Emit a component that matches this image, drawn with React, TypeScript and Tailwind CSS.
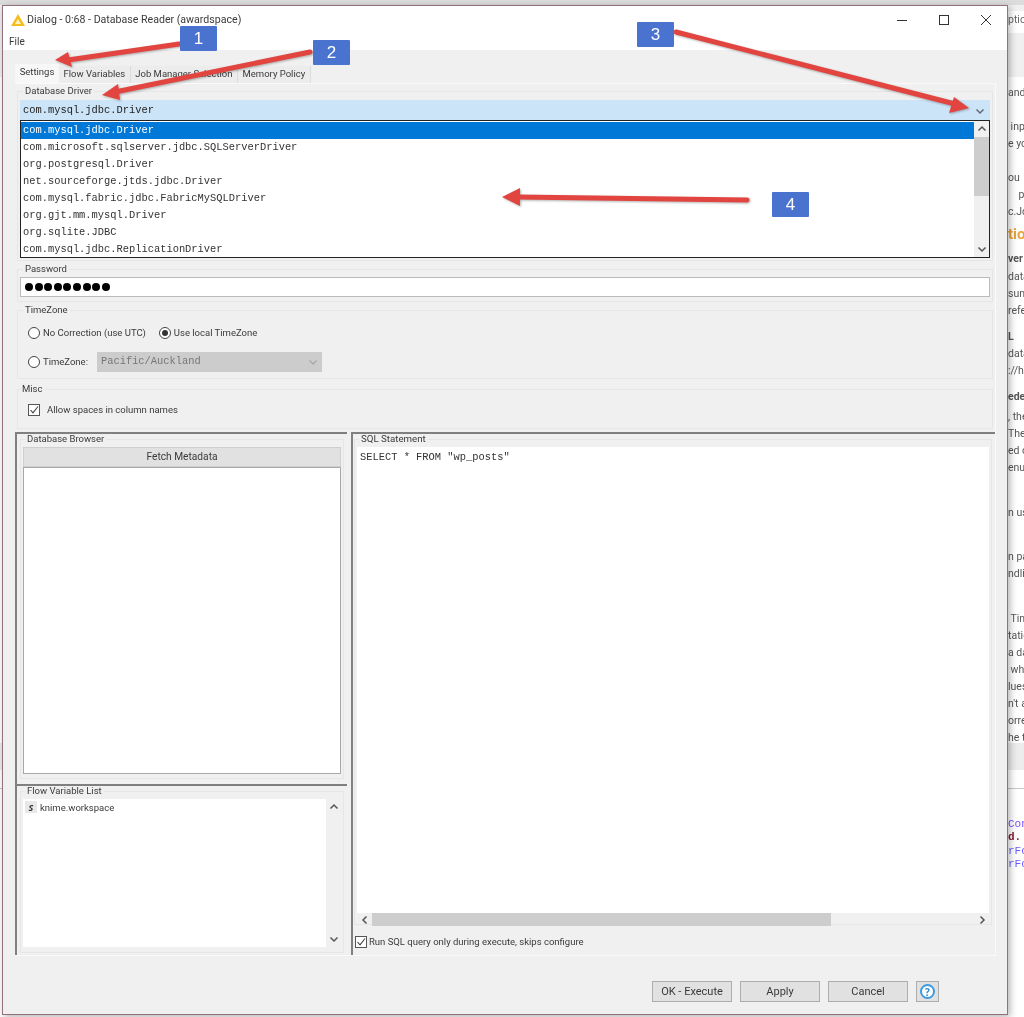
import type { ReactNode } from "react";

const ui = "font-['Roboto','Noto_Sans',sans-serif] text-[9.5px] text-[#3a3a3a]";
const mono = "font-['Liberation_Mono',monospace] text-[10.4px]";

const drivers = [
  "com.mysql.jdbc.Driver",
  "com.microsoft.sqlserver.jdbc.SQLServerDriver",
  "org.postgresql.Driver",
  "net.sourceforge.jtds.jdbc.Driver",
  "com.mysql.fabric.jdbc.FabricMySQLDriver",
  "org.gjt.mm.mysql.Driver",
  "org.sqlite.JDBC",
  "com.mysql.jdbc.ReplicationDriver",
];

// the page behind the dialog, only its first letters show
const behind = [
  { text: "and", cls: "mt-[7px]" },
  { text: " inp", cls: "mt-[17px]" },
  { text: "e yo", cls: "" },
  { text: "ou", cls: "mt-[17px]" },
  { text: "    p", cls: "" },
  { text: "c.Jd", cls: "" },
  { text: "tio", cls: "mt-[4px] h-[20px] leading-[20px] text-[15px] font-bold text-[#e8a33d]" },
  { text: "ver", cls: "mt-[6px] font-bold" },
  { text: "data", cls: "mt-[1px]" },
  { text: "sun", cls: "" },
  { text: "refe", cls: "" },
  { text: "L", cls: "mt-[9px] font-bold" },
  { text: "data", cls: "" },
  { text: "://h", cls: "" },
  { text: "ede", cls: "mt-[9px] font-bold" },
  { text: ", the", cls: "mt-[3px]" },
  { text: "The", cls: "" },
  { text: "ed o", cls: "" },
  { text: "enu.", cls: "" },
  { text: "n us", cls: "mt-[28px]" },
  { text: "n pa", cls: "mt-[27px]" },
  { text: "ndlin", cls: "" },
  { text: " Tim", cls: "mt-[28px]" },
  { text: "tatio", cls: "" },
  { text: "a da", cls: "" },
  { text: " wh", cls: "" },
  { text: "lues", cls: "" },
  { text: "n't a", cls: "" },
  { text: "orre", cls: "" },
  { text: "he t", cls: "" },
];

const codeLines = [
  { text: "Con", cls: "text-[#7c4dff]" },
  { text: "d.", cls: "font-bold text-[#8b1a3a]" },
  { text: "rFo", cls: "text-[#6a5cff]" },
  { text: "rFo", cls: "text-[#6a5cff]" },
];

function Group({ label, className, legendCls = "ml-[3px]", children }: { label: string; className?: string; legendCls?: string; children: ReactNode }) {
  return (
    <fieldset className={`mx-[2px] border border-[#e6e6e6] px-[2px] ${className ?? ""}`}>
      <legend className={`${ui} ${legendCls} px-[2px] leading-[14px]`}>{label}</legend>
      {children}
    </fieldset>
  );
}

function Chevron({ dir = "down", color = "#555" }: { dir?: "up" | "down" | "left" | "right"; color?: string }) {
  const d = {
    down: "M1.5 3.5 L5 7 L8.5 3.5",
    up: "M1.5 6.5 L5 3 L8.5 6.5",
    left: "M6.5 1.5 L3 5 L6.5 8.5",
    right: "M3.5 1.5 L7 5 L3.5 8.5",
  }[dir];
  return (
    <svg width="10" height="10" viewBox="0 0 10 10" fill="none" stroke={color} strokeWidth="1.5">
      <path d={d} />
    </svg>
  );
}

function Radio({ on, label }: { on?: boolean; label: string }) {
  return (
    <div className="flex items-center gap-[3px]">
      <span className="flex h-[12px] w-[12px] items-center justify-center rounded-full border border-[#444] bg-white">
        {on && <span className="h-[6px] w-[6px] rounded-full bg-[#333]" />}
      </span>
      <span className={ui}>{label}</span>
    </div>
  );
}

function Check({ label, gap }: { label: string; gap: string }) {
  return (
    <div className={`flex items-center ${gap}`}>
      <span className="flex h-[12px] w-[12px] items-center justify-center border border-[#555] bg-white">
        <svg width="10" height="10" viewBox="0 0 10 10" fill="none" stroke="#444" strokeWidth="1.1">
          <path d="M1.5 5 L4 7.8 L9 1.5" />
        </svg>
      </span>
      <span className={ui}>{label}</span>
    </div>
  );
}

function DialogButton({ label }: { label: string }) {
  return (
    <button className={`${ui} h-[21px] w-[80px] border border-[#adadad] bg-[#e1e1e1] pt-[1px] !text-[11px]`}>{label}</button>
  );
}

function Badge({ n, cls }: { n: number; cls: string }) {
  return (
    <div className={`absolute flex h-[25px] w-[37px] items-center justify-center rounded-[1px] bg-[#4a72cf] font-['Liberation_Sans',sans-serif] text-[17px] text-white ${cls}`}>
      {n}
    </div>
  );
}

function Arrow({ x1, y1, x2, y2, head }: { x1: number; y1: number; x2: number; y2: number; head: string }) {
  return (
    <g>
      <line x1={x1} y1={y1} x2={x2} y2={y2} stroke="#e2443f" strokeWidth="5" strokeLinecap="round" />
      <polygon points={head} fill="#e2443f" />
    </g>
  );
}

export default function App() {
  return (
    <div className="relative flex h-[1017px] w-[1024px] flex-col overflow-hidden bg-white font-['Noto_Sans',sans-serif] blur-[0.4px]">
      {/* ── page behind the dialog ── */}
      <div className="h-[5px] bg-[#dcdcdc]" />
      <div className="h-[72px] bg-[#f0f0f0] pl-[1008px] pt-[6px]">
        <div className="h-[22px] bg-white font-['Roboto',sans-serif] text-[10.5px] leading-[17px] text-[#666]">ptic</div>
      </div>
      <div className="h-[666px] overflow-hidden pl-[1008px]">
        {behind.map((l, i) => (
          <div key={i} className={`h-[17px] whitespace-pre font-['Roboto',sans-serif] text-[10.5px] leading-[17px] text-[#555] ${l.cls}`}>
            {l.text}
          </div>
        ))}
      </div>
      <div className="h-[27px] bg-[#ececec]" />
      <div className="mt-[18px] border-t border-[#c8c8c8] pl-[1008px] pt-[29px]">
        {codeLines.map((l, i) => (
          <div key={i} className={`h-[13.3px] font-['Liberation_Mono',monospace] text-[11px] leading-[13px] ${l.cls}`}>
            {l.text}
          </div>
        ))}
      </div>

      {/* ── dialog window ── */}
      <div className="absolute left-[2px] top-[5px] flex h-[1010px] w-[1006px] flex-col border border-[#94707f] bg-[#f0f0f0] shadow-[2px_2px_7px_rgba(0,0,0,0.3)]">
        <div className="h-[44px] bg-white">
          <div className="flex h-[28px] items-center pl-[8px] pr-[16px]">
            <svg width="14" height="12" viewBox="0 0 14 12" className="mr-[2px]">
              <path d="M7 0 L14 12 L0 12 Z" fill="#f5bd1f" />
              <path d="M7 5 L10 10 L4 10 Z" fill="#fff3c4" />
            </svg>
            <span className={`${ui} !text-[10.6px]`}>Dialog - 0:68 - Database Reader (awardspace)</span>
            <div className="ml-auto flex items-center gap-[32px]">
              <svg width="10" height="10" viewBox="0 0 10 10" stroke="#333" fill="none">
                <path d="M0 5.5 H10" />
              </svg>
              <svg width="10" height="10" viewBox="0 0 10 10" stroke="#333" fill="none">
                <rect x="0.5" y="0.5" width="9" height="9" />
              </svg>
              <svg width="10" height="10" viewBox="0 0 10 10" stroke="#333" fill="none">
                <path d="M0 0 L10 10 M10 0 L0 10" />
              </svg>
            </div>
          </div>
          <div className={`${ui} !text-[10px] pl-[6px] leading-[15px]`}>File</div>
        </div>

        <div className="flex flex-1 flex-col">
          {/* tabs */}
          <div className="mt-[15px] ml-[12px] flex h-[18px] items-end">
            <div className={`${ui} flex h-[19px] w-[44px] items-center justify-center bg-[#f7f7f7] pb-[2px]`}>Settings</div>
            {["Flow Variables", "Job Manager Selection", "Memory Policy"].map((t) => (
              <div key={t} className={`${ui} flex h-[17px] items-center border-r border-[#dcdcdc] bg-[#ececec] px-[4.5px]`}>
                {t}
              </div>
            ))}
          </div>

          {/* settings panel */}
          <div className="relative ml-[12px] mr-[11px] flex h-[873px] flex-col border-b border-r border-t border-[#fafafa]">
            <Group label="Database Driver" className="h-[177px]">
              <div className="mt-[2px] flex h-[20px] items-center justify-between bg-[#cce4f7] pl-[3px] pr-[5px] pt-[1px]">
                <span className={`${mono} text-[#222]`}>com.mysql.jdbc.Driver</span>
                <Chevron color="#667" />
              </div>
            </Group>

            <Group label="Password" className="mt-[1px] h-[40px]">
              <div className="mt-[1px] flex h-[20px] items-center gap-[1.6px] border border-[#bbb] bg-white pl-[4px]">
                {Array.from({ length: 9 }).map((_, i) => (
                  <span key={i} className="h-[8px] w-[8px] rounded-full bg-black" />
                ))}
              </div>
            </Group>

            <Group label="TimeZone" className="mt-[1px] h-[76px]">
              <div className="mt-[8px] flex h-[16px] items-center gap-[13px] pl-[8px]">
                <Radio label="No Correction (use UTC)" />
                <Radio on label="Use local TimeZone" />
              </div>
              <div className="mt-[11px] flex h-[20px] items-center pl-[8px]">
                <Radio label="TimeZone:" />
                <div className="ml-[9px] flex h-[20px] w-[225px] items-center justify-between bg-[#cccccc] pl-[4px] pr-[4px]">
                  <span className={`${mono} text-[#777]`}>Pacific/Auckland</span>
                  <Chevron color="#aaa" />
                </div>
              </div>
            </Group>

            <Group label="Misc" legendCls="ml-0" className="mt-[3px] h-[47px]">
              <div className="mt-[7px] pl-[8px]">
                <Check label="Allow spaces in column names" gap="gap-[7px]" />
              </div>
            </Group>

            {/* lower split */}
            <div className="mt-[3px] flex flex-1 gap-[4px]">
              <div className="flex w-[332px] flex-col border-l-2 border-t-2 border-[#808080]">
                <fieldset className="mx-[3px] flex h-[345px] flex-col border border-[#e6e6e6] px-[2px]">
                  <legend className={`${ui} ml-[2px] px-[2px] leading-[10px]`}>Database Browser</legend>
                  <button className={`${ui} mt-[3px] h-[20px] border border-[#cfcfcf] bg-[#e1e1e1] !text-[10.2px]`}>Fetch Metadata</button>
                  <div className="h-[307px] border border-[#a8a8a8] bg-white" />
                </fieldset>
                <div className="mt-[5px] flex flex-1 flex-col border-t-2 border-[#808080]">
                  <fieldset className="mx-[3px] flex h-[167px] flex-col border border-[#e6e6e6] px-[2px]">
                    <legend className={`${ui} ml-[2px] px-[2px] leading-[10px]`}>Flow Variable List</legend>
                    <div className="mt-[3px] flex h-[148px]">
                      <div className="flex h-full flex-1 items-start bg-white pl-[2px] pt-[2px]">
                        <span className="mr-[3px] flex h-[12px] w-[12px] items-center justify-center bg-[#e8e8e8] text-[9px] font-bold italic leading-none text-[#333]">S</span>
                        <span className={`${ui} leading-[13px]`}>knime.workspace</span>
                      </div>
                      <div className="flex w-[15px] flex-col items-center justify-between py-[3px]">
                        <Chevron dir="up" />
                        <Chevron />
                      </div>
                    </div>
                  </fieldset>
                </div>
              </div>

              <div className="flex flex-1 flex-col border-l-2 border-t-2 border-[#808080]">
                <fieldset className="mx-[1px] mr-[3px] flex h-[491px] flex-col border border-[#e6e6e6] px-[2px]">
                  <legend className={`${ui} ml-[2px] px-[2px] leading-[10px] !text-[9.7px]`}>SQL Statement</legend>
                  <div className={`${mono} mt-[3px] h-[466px] bg-white pl-[3px] pt-[4px] leading-[12px] text-[#333]`}>
                    SELECT * FROM "wp_posts"
                  </div>
                  <div className="flex h-[13px] items-center">
                    <div className="flex w-[15px] justify-center">
                      <Chevron dir="left" />
                    </div>
                    <div className="h-full w-[459px] bg-[#cdcdcd]" />
                    <div className="ml-auto flex w-[15px] justify-center">
                      <Chevron dir="right" />
                    </div>
                  </div>
                </fieldset>
                <div className="mt-[10px] pl-[2px]">
                  <Check label="Run SQL query only during execute, skips configure" gap="gap-[2px]" />
                </div>
              </div>
            </div>

            {/* open combo list, lies over the groups below the driver box */}
            <div className="absolute left-[5px] top-[36px] flex h-[138px] w-[970px] border border-[#222] bg-white">
              <div className="flex-1 pt-[1px]">
                {drivers.map((d, i) => (
                  <div key={d} className={`${mono} h-[17px] pl-[2px] leading-[17px] ${i === 0 ? "bg-[#0078d7] text-white" : "text-[#333]"}`}>
                    {d}
                  </div>
                ))}
              </div>
              <div className="flex w-[15px] flex-col items-center justify-between bg-[#f0f0f0]">
                <div className="flex h-[16px] items-center">
                  <Chevron dir="up" />
                </div>
                <div className="mb-auto h-[59px] w-full bg-[#cdcdcd]" />
                <div className="flex h-[16px] items-center">
                  <Chevron />
                </div>
              </div>
            </div>
          </div>

          {/* dialog buttons */}
          <div className="mt-[25px] flex items-center justify-end gap-[8px] pr-[68px]">
            <DialogButton label="OK - Execute" />
            <DialogButton label="Apply" />
            <DialogButton label="Cancel" />
            <button className="flex h-[21px] w-[23px] items-center justify-center border border-[#adadad] bg-[#e1e1e1]">
              <span className="flex h-[15px] w-[15px] items-center justify-center rounded-full border-2 border-[#3d9be0] bg-white text-[10px] font-bold leading-none text-[#2b8ad6]">?</span>
            </button>
          </div>
        </div>
      </div>

      {/* ── annotations ── */}
      <svg className="absolute left-0 top-0 drop-shadow-[1px_1px_1px_rgba(0,0,0,0.3)]" width="1024" height="1017">
        <Arrow x1={179} y1={44} x2={68} y2={60} head="55,60 68,52 72,67" />
        <Arrow x1={310} y1={52} x2={115} y2={92} head="102,95 118,84 120,100" />
        <Arrow x1={676} y1={32} x2={955} y2={104} head="969,108 954,97 949,113" />
        <Arrow x1={747} y1={200} x2={518} y2={197} head="502,197 520,188 520,206" />
      </svg>
      <Badge n={1} cls="left-[180px] top-[26px]" />
      <Badge n={2} cls="left-[313px] top-[40px]" />
      <Badge n={3} cls="left-[637px] top-[22px]" />
      <Badge n={4} cls="left-[772px] top-[192px]" />
    </div>
  );
}
